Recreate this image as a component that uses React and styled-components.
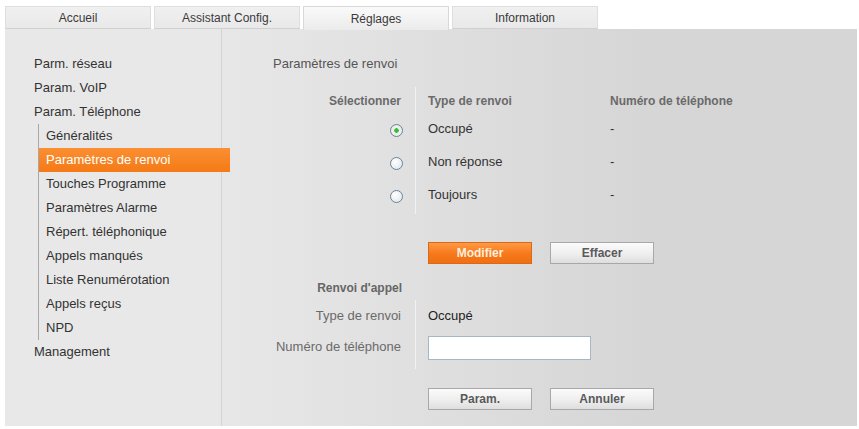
import styled, { createGlobalStyle } from 'styled-components';

const GlobalStyle = createGlobalStyle`
  body {
    margin: 0;
    background: #ffffff;
    font-family: "Liberation Sans", Arial, sans-serif;
  }
`;

const tabs = ['Accueil', 'Assistant Config.', 'Réglages', 'Information'];

const menu = [
  { label: 'Parm. réseau' },
  { label: 'Param. VoIP' },
  {
    label: 'Param. Téléphone',
    children: [
      'Généralités',
      'Paramètres de renvoi',
      'Touches Programme',
      'Paramètres Alarme',
      'Répert. téléphonique',
      'Appels manqués',
      'Liste Renumérotation',
      'Appels reçus',
      'NPD',
    ],
  },
  { label: 'Management' },
];

const rows = [
  { type: 'Occupé', checked: true },
  { type: 'Non réponse', checked: false },
  { type: 'Toujours', checked: false },
];

const App = () => {
  return (
    <>
      <GlobalStyle />
      <Page>
        <TabBar>
          {tabs.map((t) => (
            <Tab key={t} active={t === 'Réglages'}>
              {t}
            </Tab>
          ))}
        </TabBar>
        <Panel>
          <Sidebar>
            {menu.map((item) => (
              <div key={item.label}>
                <MenuItem>{item.label}</MenuItem>
                {item.children && (
                  <SubList>
                    {item.children.map((c) => (
                      <SubItem key={c} active={c === 'Paramètres de renvoi'}>
                        {c}
                      </SubItem>
                    ))}
                  </SubList>
                )}
              </div>
            ))}
          </Sidebar>
          <Main>
            <Title>Paramètres de renvoi</Title>
            <Table>
              <HeadCell right>Sélectionner</HeadCell>
              <HeadCell>Type de renvoi</HeadCell>
              <HeadCell>Numéro de téléphone</HeadCell>
              {rows.map((r) => (
                <Row key={r.type}>
                  <RadioCell>
                    <Radio checked={r.checked} />
                  </RadioCell>
                  <Cell>{r.type}</Cell>
                  <Cell>-</Cell>
                </Row>
              ))}
            </Table>
            <ButtonRow top="28px">
              <Button primary>Modifier</Button>
              <Button>Effacer</Button>
            </ButtonRow>
            <SectionLabel>Renvoi d'appel</SectionLabel>
            <Form>
              <FormLabel>Type de renvoi</FormLabel>
              <FormValue>Occupé</FormValue>
              <FormLabel>Numéro de téléphone</FormLabel>
              <FormValue>
                <Input type="text" />
              </FormValue>
            </Form>
            <ButtonRow top="19px">
              <Button>Param.</Button>
              <Button>Annuler</Button>
            </ButtonRow>
          </Main>
        </Panel>
      </Page>
    </>
  );
};

const Page = styled.div`
  width: 859px;
  height: 429px;
  padding: 6px 0 0 5px;
  box-sizing: border-box;
`;

const TabBar = styled.div`
  display: flex;
  gap: 3px;
  height: 23px;
`;

const Tab = styled.div`
  width: 146px;
  height: ${(p) => (p.active ? '24px' : '23px')};
  box-sizing: border-box;
  display: flex;
  align-items: center;
  justify-content: center;
  font-size: 12px;
  color: #3a3a3a;
  border: 1px solid ${(p) => (p.active ? '#d8d8d8' : '#dedede')};
  border-bottom: ${(p) => (p.active ? 'none' : '1px solid #d0d0d0')};
  background: ${(p) =>
    p.active
      ? 'linear-gradient(#fafafa, #ebebeb)'
      : 'linear-gradient(#f0f0f0, #e9e9e9)'};
  position: relative;
  z-index: 1;
`;

const Panel = styled.div`
  display: flex;
  width: 852px;
  height: 397px;
  background: linear-gradient(to right, #e9e9e9 0%, #e6e6e6 30%, #d6d6d6 75%, #d6d6d6 100%);
`;

const Sidebar = styled.div`
  width: 217px;
  flex-shrink: 0;
  background: #e8e8e8;
  border-right: 1px solid #d4d4d4;
  padding: 23px 0 0 29px;
  box-sizing: border-box;
  font-size: 13px;
  color: #333;
`;

const MenuItem = styled.div`
  height: 24px;
  line-height: 24px;
`;

const SubList = styled.div`
  margin-left: 4px;
  border-left: 1px solid #a8a8a8;
`;

const SubItem = styled.div`
  width: 191px;
  height: 24px;
  line-height: 24px;
  padding-left: 7px;
  box-sizing: border-box;
  color: ${(p) => (p.active ? '#ffffff' : '#333')};
  background: ${(p) =>
    p.active ? 'linear-gradient(#fb8f32, #f47a16)' : 'transparent'};
  position: relative;
  z-index: 1;
`;

const Main = styled.div`
  flex: 1;
  padding-top: 23px;
  font-size: 13px;
  color: #333;
`;

const Title = styled.div`
  height: 24px;
  line-height: 24px;
  margin-left: 51px;
  color: #555;
`;

const Table = styled.div`
  display: grid;
  grid-template-columns: 194px 182px auto;
  margin-top: 11px;
`;

const HeadCell = styled.div`
  height: 28px;
  line-height: 28px;
  font-size: 12px;
  font-weight: bold;
  color: #6a6a6a;
  text-align: ${(p) => (p.right ? 'right' : 'left')};
  padding: ${(p) => (p.right ? '0 14px 0 0' : '0 0 0 12px')};
  border-right: ${(p) => (p.right ? '1px solid #f2f2f2' : 'none')};
`;

const Row = styled.div`
  display: contents;
`;

const Cell = styled.div`
  height: 33px;
  line-height: 28px;
  padding-left: 12px;
`;

const RadioCell = styled.div`
  height: 33px;
  display: flex;
  justify-content: flex-end;
  padding: 9px 12px 0 0;
  box-sizing: border-box;
  border-right: 1px solid #f2f2f2;
`;

const Radio = styled.span`
  width: 11px;
  height: 11px;
  border-radius: 50%;
  border: 1px solid #6f8294;
  background: ${(p) =>
    p.checked
      ? 'radial-gradient(circle, #3cb83c 0, #3cb83c 2px, #eef3ee 2.5px, #dfe5e8 100%)'
      : 'radial-gradient(circle at 40% 35%, #ffffff, #dde3e8)'};
`;

const ButtonRow = styled.div`
  display: flex;
  gap: 18px;
  margin: ${(p) => p.top} 0 0 206px;
`;

const Button = styled.div`
  width: 104px;
  height: 22px;
  box-sizing: border-box;
  display: flex;
  align-items: center;
  justify-content: center;
  font-size: 12px;
  font-weight: bold;
  color: ${(p) => (p.primary ? '#ffeede' : '#5a5a5a')};
  border: 1px solid ${(p) => (p.primary ? '#d8681c' : '#a8a8a8')};
  background: ${(p) =>
    p.primary
      ? 'linear-gradient(#ff9a44, #f6781a 55%, #f07012)'
      : 'linear-gradient(#fbfbfb, #eeeeee 55%, #dedede)'};
`;

const SectionLabel = styled.div`
  width: 180px;
  text-align: right;
  margin-top: 12px;
  height: 24px;
  line-height: 24px;
  font-size: 12px;
  font-weight: bold;
  color: #666;
`;

const Form = styled.div`
  display: grid;
  grid-template-columns: 194px auto;
  grid-template-rows: 31px 38px;
`;

const FormLabel = styled.div`
  text-align: right;
  padding-right: 14px;
  color: #6a6a6a;
  line-height: 32px;
  border-right: 1px solid #f2f2f2;
`;

const FormValue = styled.div`
  padding-left: 12px;
  line-height: 32px;
  color: #222;
`;

const Input = styled.input`
  width: 163px;
  height: 24px;
  box-sizing: border-box;
  margin-top: 5px;
  border: 1px solid #a7b6c4;
  background: #ffffff;
  vertical-align: top;
`;

export default App;
